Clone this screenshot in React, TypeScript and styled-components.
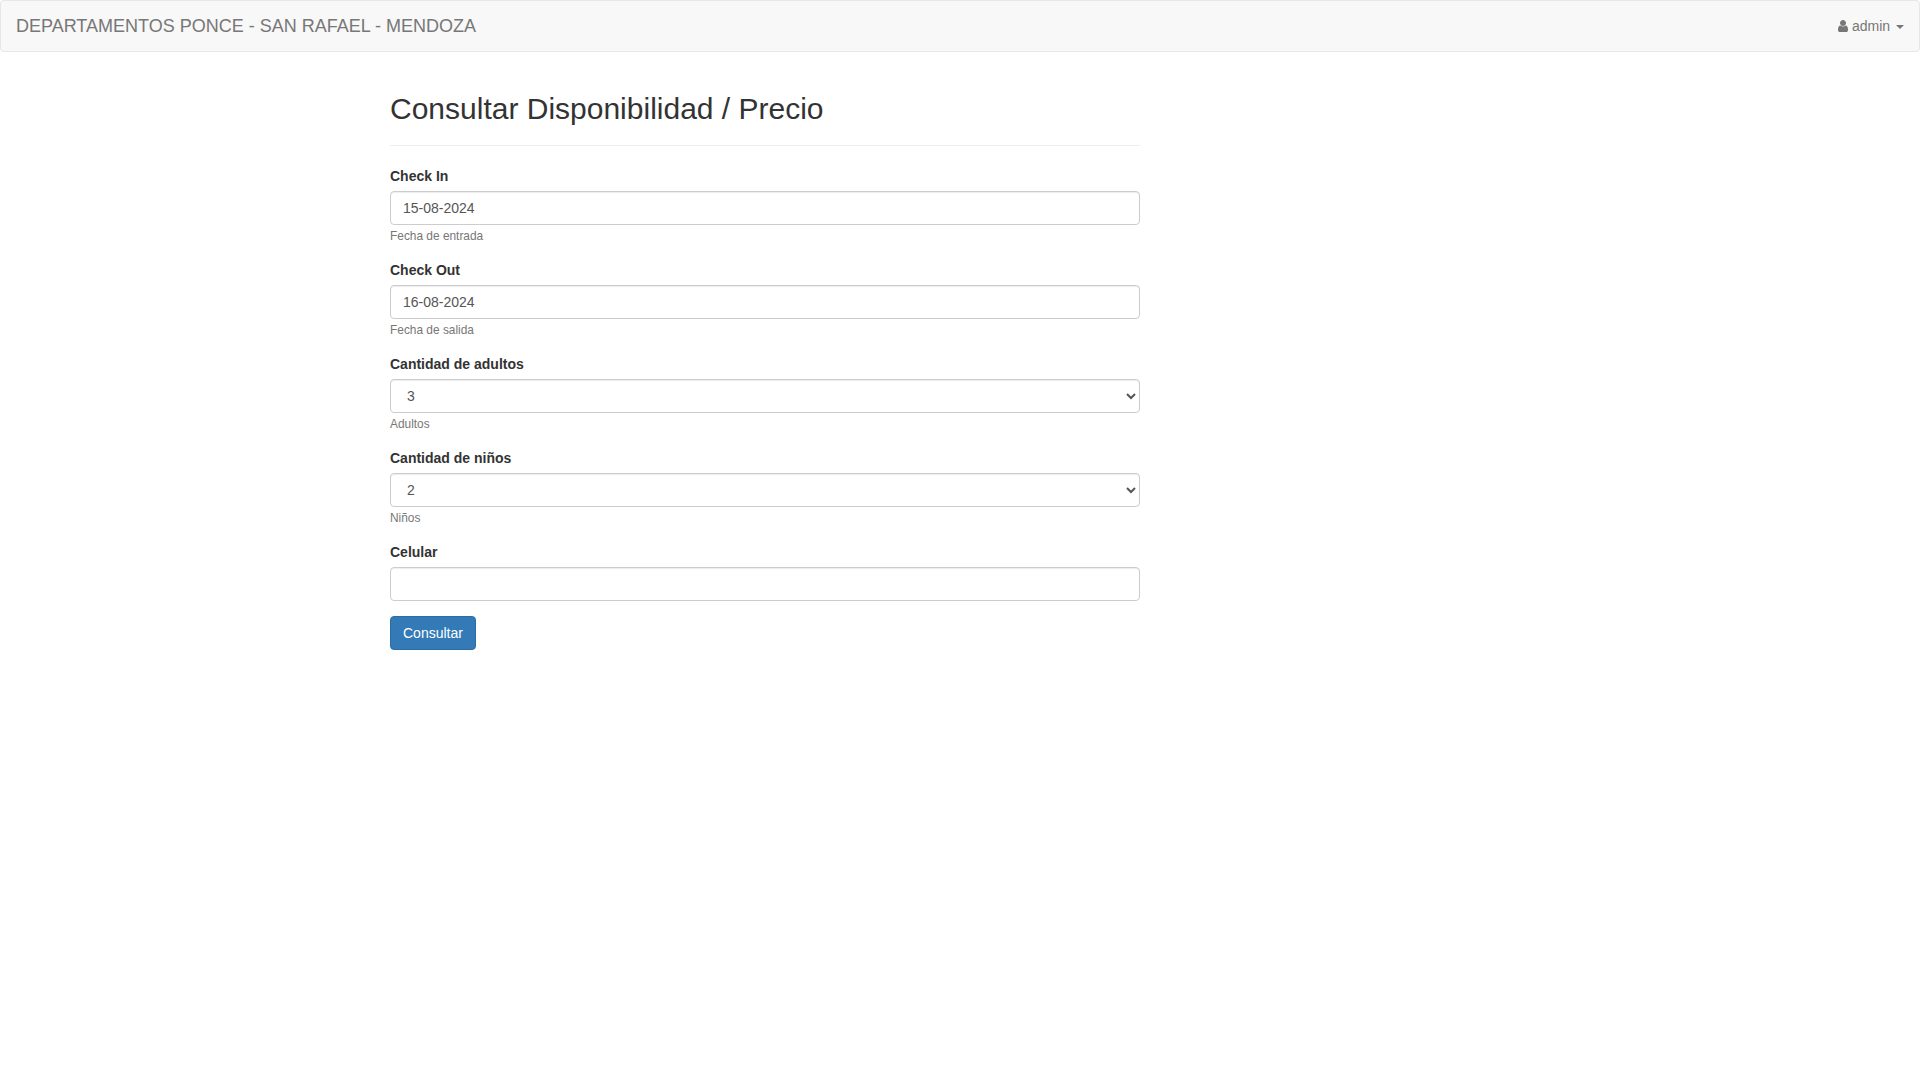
import React from "react";
import styled, { createGlobalStyle } from "styled-components";

const GlobalStyle = createGlobalStyle`
  *, *::before, *::after { box-sizing: border-box; }
  body {
    margin: 0;
    font-family: "Helvetica Neue", Helvetica, Arial, "Liberation Sans", sans-serif;
    font-size: 14px;
    line-height: 1.42857143;
    color: #333;
    background: #fff;
  }
`;

const Navbar = styled.nav`
  display: flex;
  justify-content: space-between;
  min-height: 52px;
  margin-bottom: 20px;
  background: #f8f8f8;
  border: 1px solid #e7e7e7;
  border-radius: 4px;
`;

const Brand = styled.a`
  padding: 15px;
  font-size: 18px;
  line-height: 20px;
  color: #777;
`;

const UserMenu = styled.a`
  display: block;
  padding: 15px;
  line-height: 20px;
  color: #777;
`;

const UserIcon = styled.svg`
  width: 10px;
  height: 14px;
  vertical-align: -2px;
  fill: currentColor;
`;

const Caret = styled.b`
  display: inline-block;
  width: 0;
  height: 0;
  margin-left: 2px;
  vertical-align: middle;
  border-top: 4px solid;
  border-right: 4px solid transparent;
  border-left: 4px solid transparent;
`;

const Container = styled.main`
  width: 1170px;
  margin: 0 auto;
  padding: 0 15px;
`;

const Column = styled.section`
  width: 750px;
`;

const PageHeader = styled.header`
  padding-bottom: 10px;
  margin: 40px 0 20px;
  border-bottom: 1px solid #eee;
`;

const Title = styled.h2`
  margin: 20px 0 10px;
  font-size: 30px;
  font-weight: 500;
  line-height: 33px;
`;

const FormGroup = styled.div`
  margin-bottom: 15px;
`;

const Label = styled.label`
  display: inline-block;
  margin-bottom: 5px;
  font-weight: 700;
`;

const Input = styled.input`
  display: block;
  width: 100%;
  height: 34px;
  padding: 6px 12px;
  font: inherit;
  color: #555;
  background: #fff;
  border: 1px solid #ccc;
  border-radius: 4px;
  box-shadow: inset 0 1px 1px rgba(0, 0, 0, 0.075);
`;

const Select = styled(Input).attrs({ as: "select" })``;

const Help = styled.small`
  font-size: 85%;
  color: #777;
`;

const Button = styled.button`
  padding: 6px 12px;
  font: inherit;
  color: #fff;
  background: #337ab7;
  border: 1px solid #2e6da4;
  border-radius: 4px;
`;

type Field = { id: string; label: string; value: string; help?: string; options?: string[] };

const fields: Field[] = [
  { id: "checkin", label: "Check In", value: "15-08-2024", help: "Fecha de entrada" },
  { id: "checkout", label: "Check Out", value: "16-08-2024", help: "Fecha de salida" },
  { id: "adultos", label: "Cantidad de adultos", value: "3", help: "Adultos", options: ["1", "2", "3", "4"] },
  { id: "ninos", label: "Cantidad de niños", value: "2", help: "Niños", options: ["0", "1", "2", "3"] },
  { id: "celular", label: "Celular", value: "" },
];

export default function App() {
  return (
    <>
      <GlobalStyle />
      <Navbar>
        <Brand>DEPARTAMENTOS PONCE - SAN RAFAEL - MENDOZA</Brand>
        <UserMenu>
          <UserIcon viewBox="0 0 1280 1792">
            <path d="M1280 1399q0 109-62.500 187t-150.500 78h-854q-88 0-150.500-78t-62.500-187q0-85 8.500-160.500t31.500-152 58.500-131 94-89 134.500-34.500q131 128 313 128t313-128q76 0 134.500 34.500t94 89 58.500 131 31.500 152 8.500 160.500zM1024 512q0 159-112.500 271.500t-271.500 112.500-271.500-112.500-112.500-271.500 112.500-271.500 271.500-112.500 271.500 112.500 112.500 271.500z" />
          </UserIcon>{" "}
          admin <Caret />
        </UserMenu>
      </Navbar>
      <Container>
        <Column>
          <PageHeader>
            <Title>Consultar Disponibilidad / Precio</Title>
          </PageHeader>
          <form>
            {fields.map((f) => (
              <FormGroup key={f.id}>
                <Label htmlFor={f.id}>{f.label}</Label>
                {f.options ? (
                  <Select id={f.id} defaultValue={f.value}>
                    {f.options.map((o) => (
                      <option key={o}>{o}</option>
                    ))}
                  </Select>
                ) : (
                  <Input id={f.id} defaultValue={f.value} />
                )}
                {f.help && <Help>{f.help}</Help>}
              </FormGroup>
            ))}
            <Button type="button">Consultar</Button>
          </form>
        </Column>
      </Container>
    </>
  );
}
